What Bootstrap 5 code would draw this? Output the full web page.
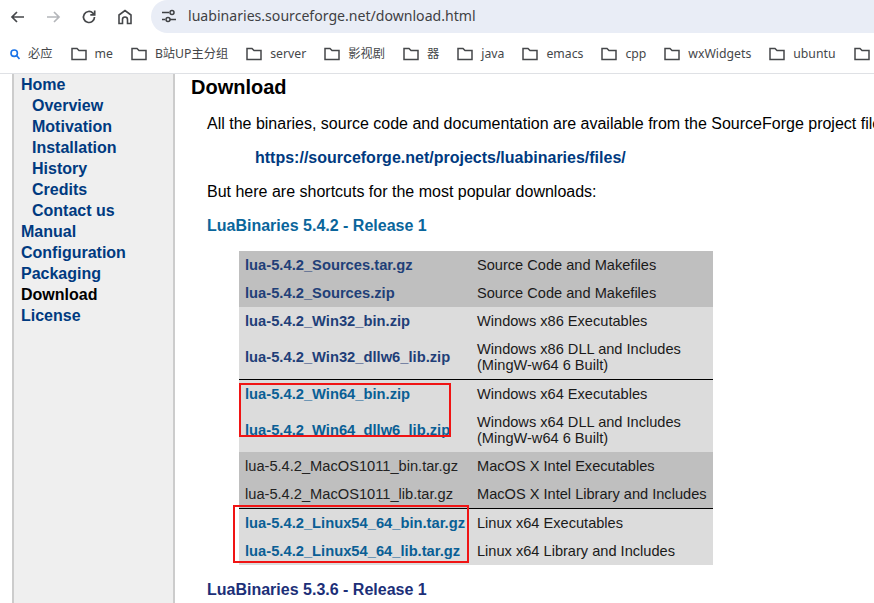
<!DOCTYPE html>
<html lang="zh">
<head>
<meta charset="utf-8">
<title>LuaBinaries Download</title>
<link href="https://cdn.jsdelivr.net/npm/bootstrap@5.3.0/dist/css/bootstrap.min.css" rel="stylesheet">
<style>
html,body{height:603px;overflow:hidden;background:#fff}
body{font-family:"Liberation Sans",Arial,sans-serif;font-size:16px;color:#000}
.chrome-top{height:33px;padding-left:9px}
.tool-ico{width:18px;height:18px;flex:none;display:block}
.tool-back{margin-right:17px}.tool-fwd{margin-right:18px}.tool-reload{margin-right:18px}.tool-home{margin-right:17px}
.url-pill{height:33px;flex:1;background:#e9edf6;border-radius:17px 0 0 17px;padding-left:10px;margin-top:-1px;font-family:"Noto Sans","Open Sans",sans-serif;font-size:14.1px;color:#3f4144;white-space:nowrap}
.tune{width:16px;height:16px;margin-right:11px;flex:none}
.bm-bar{height:41px;border-bottom:1px solid #dfe1e5;padding-left:10px;gap:18px;white-space:nowrap;font-family:"Noto Sans","Noto Sans CJK SC",sans-serif;font-size:12.25px;color:#45474a;overflow:hidden;padding-top:2px}
.bm-item{gap:8px;flex:none}
.bm-folder{width:16px;height:14px;flex:none;display:block}
.page-wrap{height:530px;overflow:hidden;padding-left:12px}
.side-nav{width:163px;flex:none;background:#efefef;border-left:2px solid #ccc;border-right:2px solid #ccc;padding:0 0 0 7px;font-weight:700;line-height:21px}
.side-nav a{display:block;color:#003a80;text-decoration:none}
.side-nav a.sub-link{padding-left:11px}
.side-nav .here{color:#000}
.main-doc{padding-left:17px;min-width:0;flex:1;overflow:hidden;white-space:nowrap}
.doc-title{font-size:20px;font-weight:700;line-height:23px;margin:2px 0 0 -1px;padding:0}
.doc-p{margin:0;padding-left:15px;line-height:18px}
.p-intro{margin-top:16px}
.p-url{padding-left:63px;margin-top:16px;font-weight:700;color:#003a80}
.p-short{margin-top:16px}
.rel{font-weight:700;color:#0a659b;margin-top:16px;line-height:18px;padding-left:15px}
.rel-dark{color:#1c2f78}
.dl-table{margin:16px 0 0 47px;width:474px;table-layout:fixed;border-collapse:collapse;line-height:16px;font-size:14.72px}
.dl-table td{padding:6px;vertical-align:middle}
.dl-table td:first-child{width:232px;font-weight:700;color:#1f3f78}
.dark-row{background:#bfbfbf}
.light-row{background:#dcdcdc}
.sep-row td{border-top:1px solid #000}
.dl-table td.plain-name{font-weight:400;color:#222;font-size:14.65px}
.dl-table td.teal-name{color:#0a5f95}
.dl-table td.desc{color:#1a1a1a;font-size:14.6px}
.mark-box{position:absolute;border:2px solid #f01414;pointer-events:none}
.box-a{left:239px;top:383px;width:212px;height:54px}
.box-b{left:233px;top:505px;width:236px;height:58px}
</style>
</head>
<body>
<div class="d-flex align-items-center chrome-top">
<svg class="tool-ico tool-back" viewBox="0 0 18 18" fill="none" stroke="#45474a" stroke-width="1.7"><path d="M15 9H3M8 4 3 9l5 5"/></svg>
<svg class="tool-ico tool-fwd" viewBox="0 0 18 18" fill="none" stroke="#b4b6ba" stroke-width="1.7"><path d="M3 9h12M10 4l5 5-5 5"/></svg>
<svg class="tool-ico tool-reload" viewBox="0 0 18 18" fill="none" stroke="#45474a" stroke-width="1.7"><path d="M14.5 9a5.5 5.5 0 1 1-1.6-3.9L14.5 6.7"/><path d="M14.7 2.5v4.4h-4.4" /></svg>
<svg class="tool-ico tool-home" viewBox="0 0 18 18" fill="none" stroke="#45474a" stroke-width="1.6"><path d="M3 15.500V7l6-4.500L15 7v8.500h-3.500v-4a2.500 2.500 0 0 0-5 0v4z"/></svg>
<div class="url-pill d-flex align-items-center">
<svg class="tune" viewBox="0 0 16 16" fill="none" stroke="#3f4144" stroke-width="1.5"><path d="M1 4.500h7M1 11.500h3"/><circle cx="11" cy="4.500" r="2"/><circle cx="7" cy="11.500" r="2"/><path d="M9 11.500h6"/></svg>
<span>luabinaries.sourceforge.net/download.html</span>
</div>
</div>
<div class="d-flex align-items-center bm-bar">
<span class="d-flex align-items-center bm-item"><svg width="10" height="11" viewBox="0 0 10 11" fill="none" stroke="#1a73e8" stroke-width="1.600"><circle cx="4.200" cy="4.200" r="3.200"/><path d="M6.500 6.500 9.500 10"/></svg><span>必应</span></span>
<span class="d-flex align-items-center bm-item"><svg class="bm-folder" viewBox="0 0 16 14" fill="none" stroke="#45474a" stroke-width="1.500"><path d="M1 12.500V1.500h5l2 2h7v9z"/></svg><span>me</span></span>
<span class="d-flex align-items-center bm-item"><svg class="bm-folder" viewBox="0 0 16 14" fill="none" stroke="#45474a" stroke-width="1.500"><path d="M1 12.500V1.500h5l2 2h7v9z"/></svg><span>B站UP主分组</span></span>
<span class="d-flex align-items-center bm-item"><svg class="bm-folder" viewBox="0 0 16 14" fill="none" stroke="#45474a" stroke-width="1.500"><path d="M1 12.500V1.500h5l2 2h7v9z"/></svg><span>server</span></span>
<span class="d-flex align-items-center bm-item"><svg class="bm-folder" viewBox="0 0 16 14" fill="none" stroke="#45474a" stroke-width="1.500"><path d="M1 12.500V1.500h5l2 2h7v9z"/></svg><span>影视剧</span></span>
<span class="d-flex align-items-center bm-item"><svg class="bm-folder" viewBox="0 0 16 14" fill="none" stroke="#45474a" stroke-width="1.500"><path d="M1 12.500V1.500h5l2 2h7v9z"/></svg><span>器</span></span>
<span class="d-flex align-items-center bm-item"><svg class="bm-folder" viewBox="0 0 16 14" fill="none" stroke="#45474a" stroke-width="1.500"><path d="M1 12.500V1.500h5l2 2h7v9z"/></svg><span>java</span></span>
<span class="d-flex align-items-center bm-item"><svg class="bm-folder" viewBox="0 0 16 14" fill="none" stroke="#45474a" stroke-width="1.500"><path d="M1 12.500V1.500h5l2 2h7v9z"/></svg><span>emacs</span></span>
<span class="d-flex align-items-center bm-item"><svg class="bm-folder" viewBox="0 0 16 14" fill="none" stroke="#45474a" stroke-width="1.500"><path d="M1 12.500V1.500h5l2 2h7v9z"/></svg><span>cpp</span></span>
<span class="d-flex align-items-center bm-item"><svg class="bm-folder" viewBox="0 0 16 14" fill="none" stroke="#45474a" stroke-width="1.500"><path d="M1 12.500V1.500h5l2 2h7v9z"/></svg><span>wxWidgets</span></span>
<span class="d-flex align-items-center bm-item"><svg class="bm-folder" viewBox="0 0 16 14" fill="none" stroke="#45474a" stroke-width="1.500"><path d="M1 12.500V1.500h5l2 2h7v9z"/></svg><span>ubuntu</span></span>
<span class="d-flex align-items-center bm-item"><svg class="bm-folder" viewBox="0 0 16 14" fill="none" stroke="#45474a" stroke-width="1.500"><path d="M1 12.500V1.500h5l2 2h7v9z"/></svg></span>
</div>
<div class="d-flex page-wrap">
<nav class="side-nav">
<a href="#">Home</a>
<a class="sub-link" href="#">Overview</a>
<a class="sub-link" href="#">Motivation</a>
<a class="sub-link" href="#">Installation</a>
<a class="sub-link" href="#">History</a>
<a class="sub-link" href="#">Credits</a>
<a class="sub-link" href="#">Contact us</a>
<a href="#">Manual</a>
<a href="#">Configuration</a>
<a href="#">Packaging</a>
<a class="here" href="#">Download</a>
<a href="#">License</a>
</nav>
<main class="main-doc">
<h1 class="doc-title">Download</h1>
<p class="doc-p p-intro">All the binaries, source code and documentation are available from the SourceForge project files.</p>
<p class="doc-p p-url">https://sourceforge.net/projects/luabinaries/files/</p>
<p class="doc-p p-short">But here are shortcuts for the most popular downloads:</p>
<div class="rel">LuaBinaries 5.4.2 - Release 1</div>
<table class="dl-table">
<tr class="dark-row"><td>lua-5.4.2_Sources.tar.gz</td><td class="desc">Source Code and Makefiles</td></tr>
<tr class="dark-row"><td>lua-5.4.2_Sources.zip</td><td class="desc">Source Code and Makefiles</td></tr>
<tr class="light-row"><td>lua-5.4.2_Win32_bin.zip</td><td class="desc">Windows x86 Executables</td></tr>
<tr class="light-row"><td>lua-5.4.2_Win32_dllw6_lib.zip</td><td class="desc">Windows x86 DLL and Includes<br>(MingW-w64 6 Built)</td></tr>
<tr class="light-row sep-row"><td class="teal-name">lua-5.4.2_Win64_bin.zip</td><td class="desc">Windows x64 Executables</td></tr>
<tr class="light-row"><td class="teal-name">lua-5.4.2_Win64_dllw6_lib.zip</td><td class="desc">Windows x64 DLL and Includes<br>(MingW-w64 6 Built)</td></tr>
<tr class="dark-row"><td class="plain-name">lua-5.4.2_MacOS1011_bin.tar.gz</td><td class="desc">MacOS X Intel Executables</td></tr>
<tr class="dark-row"><td class="plain-name">lua-5.4.2_MacOS1011_lib.tar.gz</td><td class="desc">MacOS X Intel Library and Includes</td></tr>
<tr class="light-row sep-row"><td class="teal-name">lua-5.4.2_Linux54_64_bin.tar.gz</td><td class="desc">Linux x64 Executables</td></tr>
<tr class="light-row"><td class="teal-name">lua-5.4.2_Linux54_64_lib.tar.gz</td><td class="desc">Linux x64 Library and Includes</td></tr>
</table>
<div class="rel rel-dark">LuaBinaries 5.3.6 - Release 1</div>
</main>
</div>
<div class="mark-box box-a"></div>
<div class="mark-box box-b"></div>
<script src="https://cdn.jsdelivr.net/npm/bootstrap@5.3.0/dist/js/bootstrap.bundle.min.js"></script>
</body>
</html>
